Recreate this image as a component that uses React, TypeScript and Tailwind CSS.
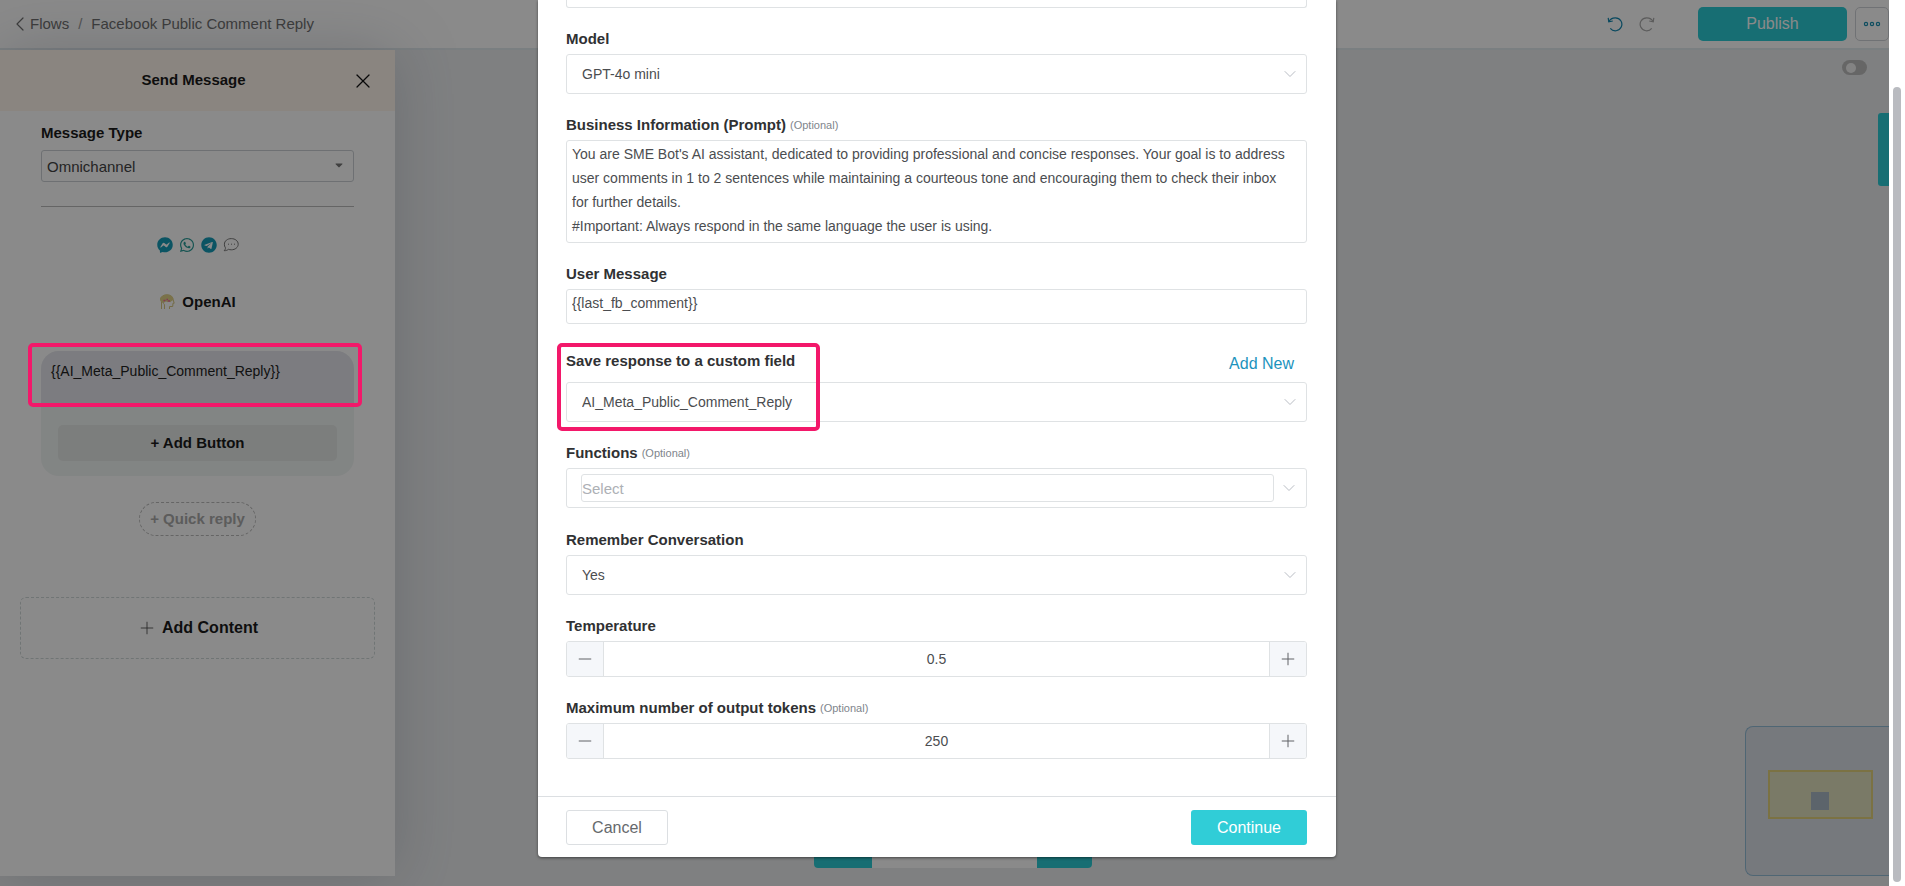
import { useState } from 'react';
import type { ReactNode } from 'react';
import { ChevronDown, ChevronLeft, Minus, Plus, X } from 'lucide-react';
import { FaCaretDown, FaFacebookMessenger, FaTelegram, FaWhatsapp } from 'react-icons/fa';

const PROMPT = `You are SME Bot's AI assistant, dedicated to providing professional and concise responses. Your goal is to address user comments in 1 to 2 sentences while maintaining a courteous tone and encouraging them to check their inbox for further details.
#Important: Always respond in the same language the user is using.`;

function UndoIcon({ className }: { className?: string }) {
  return (
    <svg viewBox="0 0 16 16" fill="none" stroke="currentColor" strokeWidth="1.2" className={className}>
      <path d="M1.2 1.800l.6 4 4-.8" />
      <path d="M1.800 5.800C3 3.200 5.500 1.800 8.300 1.800a6.500 6.500 0 1 1-5 10.600" />
    </svg>
  );
}

function ChatIcon() {
  return (
    <svg viewBox="0 0 16 16" fill="none" stroke="#777" className="size-4">
      <path d="M8.3 1.6c3.9 0 6.9 2.4 6.900 5.600s-3 5.600-6.900 5.600c-1 0-2-.2-2.800-.5-.9.8-2.400 1.400-4.300 1.400.9-.9 1.400-1.900 1.200-3A5.200 5.200 0 0 1 1.400 7.200c0-3.200 3-5.600 6.900-5.600z" />
      <path d="M5 7.200h1M8 7.200h1M11 7.200h1" />
    </svg>
  );
}

function BrainIcon() {
  return (
    <svg viewBox="0 0 16 16" fill="none" className="size-4">
      <path d="M1.500 5.500C1.800 2.500 4.500.8 8 .8s6 2 6.200 5l1 3.400H14l-.3 3.300h-3.200V15" stroke="#d6c67f" />
      <path d="M1 6C1 2.800 4 .8 8 .8s6.500 2 6.300 4.700c-.8 1.800-2.300 1.500-3 2.700-.8-1-2-.8-2.800 0C7.500 7.200 6 7.200 5.500 8.500 3.500 9 1.500 8 1 6z" fill="#e2d289" />
      <path d="M2.500 8v7M5.500 15v-4c0-1.500-1.500-1-1.500-3" stroke="#d6c67f" />
      <path d="M4.500 6.500h2M7.500 5.500h1.500M9 7h2" stroke="#f06a9b" strokeWidth="1.400" />
    </svg>
  );
}

function Label({ htmlFor, optional, children }: { htmlFor: string; optional?: boolean; children: ReactNode }) {
  return (
    <label htmlFor={htmlFor} className="block text-[15px] leading-[22px] font-bold text-[#303133]">
      {children}
      {optional && <span className="ml-1 align-[1px] text-[11px] leading-none font-normal text-[#80858c]">(Optional)</span>}
    </label>
  );
}

function SelectBox({ id, value }: { id: string; value: string }) {
  return (
    <div className="relative">
      <select
        id={id}
        className="block h-10 w-full appearance-none rounded-[3px] border border-[#dfe2e4] bg-white px-[15px] text-sm text-[#4b4d50]"
      >
        <option>{value}</option>
      </select>
      <ChevronDown strokeWidth={1.2} className="pointer-events-none absolute top-[10px] right-[7px] size-5 text-[#b9bdc4]" />
    </div>
  );
}

function Stepper({ id, initial, step }: { id: string; initial: number; step: number }) {
  const [value, setValue] = useState(initial);
  const button = 'flex w-9 shrink-0 items-center justify-center bg-[#f5f7fa] text-[#606266]';
  return (
    <div className="flex h-9 overflow-hidden rounded-[3px] border border-[#dfe2e4]">
      <button type="button" aria-label="Decrease" className={button} onClick={() => setValue(value - step)}>
        <Minus strokeWidth={1.2} className="size-5" />
      </button>
      <input
        id={id}
        value={value}
        onChange={(e) => setValue(Number(e.target.value))}
        className="min-w-0 flex-1 border-x border-[#dfe2e4] text-center text-sm text-[#4b4d50]"
      />
      <button type="button" aria-label="Increase" className={button} onClick={() => setValue(value + step)}>
        <Plus strokeWidth={1.2} className="size-5" />
      </button>
    </div>
  );
}

function TopBar() {
  return (
    <header className="flex h-[50px] shrink-0 items-center border-b-2 border-[#e2eaee] bg-white pl-2">
      <nav className="flex items-center text-[15px] text-[#6f6f6f]">
        <a href="#flows" className="flex items-center">
          <ChevronLeft strokeWidth={1.2} className="-mr-[2px] size-6" />
          Flows
        </a>
        <span className="mx-[9px] text-[#999]">/</span>
        <span>Facebook Public Comment Reply</span>
      </nav>
      <div className="ml-auto flex items-center">
        <button type="button" aria-label="Undo" className="mr-4">
          <UndoIcon className="size-4 text-[#1187b0]" />
        </button>
        <button type="button" aria-label="Redo" className="mr-[43px]">
          <UndoIcon className="size-4 -scale-x-100 text-[#aaa]" />
        </button>
        <button type="button" className="mr-2 h-[34px] w-[149px] rounded-[5px] bg-[#2bccd5] text-base text-white">
          Publish
        </button>
        <button
          type="button"
          aria-label="More"
          className="flex size-[34px] items-center justify-center rounded-[5px] border border-[#d0d3d8]"
        >
          <svg viewBox="0 0 18 6" fill="none" stroke="#1a8fb0" strokeWidth="1.200" className="w-[18px]">
            <circle cx="3" cy="3" r="1.600" />
            <circle cx="9" cy="3" r="1.600" />
            <circle cx="15" cy="3" r="1.600" />
          </svg>
        </button>
      </div>
    </header>
  );
}

function MessagePanel() {
  return (
    <aside className="mb-[10px] w-[395px] shrink-0 bg-white shadow-[0_0_60px_rgba(90,100,120,0.25)]">
      <div className="flex h-[61px] items-center bg-[#fff6ed] px-5">
        <h2 className="flex-1 pl-4 text-center text-[15px] font-bold text-[#1b1b1b]">Send Message</h2>
        <button type="button" aria-label="Close">
          <X strokeWidth={1.200} className="size-6 text-[#111]" />
        </button>
      </div>

      <div className="px-[41px] pt-[11px]">
        <label htmlFor="type" className="block text-[15px] leading-[22px] font-bold text-[#1b1b1b]">
          Message Type
        </label>
        <div className="relative mt-[6px]">
          <select id="type" className="block h-8 w-full appearance-none rounded-[3px] border border-[#ccd0d4] px-[5px] pt-[3px] text-[15px] text-[#444]">
            <option>Omnichannel</option>
          </select>
          <FaCaretDown className="pointer-events-none absolute top-[9px] right-[9px] size-3 text-[#777]" />
        </div>
        <hr className="mt-6 border-[#bbb]" />

        <div className="mt-[30px] flex justify-center gap-[6px]">
          <FaFacebookMessenger className="size-4 text-[#169cb8]" />
          <FaWhatsapp className="size-4 text-[#2a9c98]" />
          <FaTelegram className="size-4 text-[#169cb8]" />
          <ChatIcon />
        </div>
        <div className="mt-[38px] flex items-center justify-center gap-[7px]">
          <BrainIcon />
          <span className="text-[15px] leading-[22px] font-bold text-[#1b1b1b]">OpenAI</span>
        </div>

        <div className="mt-[38px] rounded-[18px] bg-[#f1f5f4]">
          <div className="h-[54px] rounded-t-[18px] bg-[#e5e6ec] px-[10px] pt-[10px] text-sm text-[#222]">
            {'{{AI_Meta_Public_Comment_Reply}}'}
          </div>
          <div className="px-[17px] pt-5 pb-[15px]">
            <button type="button" className="h-9 w-full rounded-[5px] bg-[#e5e9e7] text-[15px] font-bold text-[#1b1b1b]">
              + Add Button
            </button>
          </div>
        </div>

        <button
          type="button"
          className="mx-auto mt-[26px] block h-[34px] w-[117px] rounded-full border border-dashed border-[#bbb] text-[15px] font-bold text-[#aaa]"
        >
          + Quick reply
        </button>
      </div>

      <button
        type="button"
        className="mx-5 mt-[61px] flex h-[62px] w-[355px] items-center justify-center gap-[5px] rounded-md border border-dashed border-[#d0d8d8] text-base font-bold text-[#1b1b1b]"
      >
        <Plus strokeWidth={1} className="size-5 text-[#444]" />
        Add Content
      </button>
    </aside>
  );
}

function Canvas() {
  return (
    <main className="relative flex-1">
      <button
        type="button"
        role="switch"
        aria-checked="false"
        aria-label="Preview"
        className="absolute top-[10px] right-[22px] flex h-[15px] w-[25px] items-center rounded-full bg-[#bdbdbd] px-1"
      >
        <span className="size-[10px] rounded-full bg-[#f3f3f3]" />
      </button>
      <div className="absolute top-[63px] right-0 h-[73px] w-[11px] rounded-l-[3px] bg-[#2bccd5]" />

      <div className="absolute bottom-[18px] left-[419px] flex h-9 w-[278px] overflow-hidden rounded-[4px] bg-white">
        <div className="w-[58px] bg-[#2bccd5]" />
        <div className="ml-auto w-[55px] bg-[#2bccd5]" />
      </div>

      {/* minimap */}
      <div className="absolute right-0 bottom-[10px] h-[150px] w-[144px] rounded-l-lg border border-r-0 border-[#93bcd6] bg-[#dbe0e7]">
        <div className="absolute top-[43px] left-[22px] h-[49px] w-[105px] border-2 border-[#e4d27c] bg-[#e1e1bf]">
          <div className="absolute top-[20px] left-[41px] size-[18px] bg-[#aab9c6]" />
        </div>
      </div>
    </main>
  );
}

function OpenAiDialog() {
  return (
    <form
      role="dialog"
      aria-label="OpenAI"
      className="w-full max-w-[798px] rounded-b-[4px] bg-white shadow-[0_1px_3px_rgba(0,0,0,0.5)]"
    >
      <div className="pr-[29px] pl-7">
        <div className="h-2 rounded-b-[3px] border border-t-0 border-[#dfe2e4]" />

        <div className="mt-5 space-y-1">
          <Label htmlFor="model">Model</Label>
          <SelectBox id="model" value="GPT-4o mini" />
        </div>

        <div className="mt-5 space-y-1">
          <Label htmlFor="prompt" optional>Business Information (Prompt)</Label>
          <textarea
            id="prompt"
            defaultValue={PROMPT}
            className="block h-[103px] w-full resize-none overflow-hidden rounded-[3px] border border-[#dfe2e4] py-px pr-[15px] pl-[5px] text-sm leading-6 text-[#4b4d50]"
          />
        </div>

        <div className="mt-5 space-y-1">
          <Label htmlFor="message">User Message</Label>
          <input
            id="message"
            defaultValue="{{last_fb_comment}}"
            className="block h-[35px] w-full rounded-[3px] border border-[#dfe2e4] px-[5px] pb-2 text-sm text-[#4b4d50]"
          />
        </div>

        <div className="relative mt-5">
          <div className="mb-1 flex h-[34px] items-center justify-between">
            <Label htmlFor="field">Save response to a custom field</Label>
            <button type="button" className="mr-[13px] h-7 self-end text-base text-[#1c93bd]">
              Add New
            </button>
          </div>
          <SelectBox id="field" value="AI_Meta_Public_Comment_Reply" />
          <div className="pointer-events-none absolute -top-px -bottom-[9px] -left-[9px] w-[263px] rounded-[5px] border-4 border-[#f3186a]" />
        </div>

        <div className="mt-5 space-y-1">
          <Label htmlFor="functions" optional>Functions</Label>
          <div className="flex h-10 items-center rounded-[3px] border border-[#dfe2e4] pr-[7px] pl-[14px]">
            <input
              id="functions"
              placeholder="Select"
              className="h-7 min-w-0 flex-1 rounded-[3px] border border-[#dfe2e4] text-[15px] placeholder:text-[#adb0b5]"
            />
            <ChevronDown strokeWidth={1.2} className="ml-[5px] size-5 text-[#b9bdc4]" />
          </div>
        </div>

        <div className="mt-[21px] space-y-1">
          <Label htmlFor="remember">Remember Conversation</Label>
          <SelectBox id="remember" value="Yes" />
        </div>

        <div className="mt-5 space-y-1">
          <Label htmlFor="temperature">Temperature</Label>
          <Stepper id="temperature" initial={0.5} step={0.1} />
        </div>

        <div className="mt-5 space-y-1">
          <Label htmlFor="tokens" optional>Maximum number of output tokens</Label>
          <Stepper id="tokens" initial={250} step={1} />
        </div>
      </div>

      <div className="mt-[37px] flex justify-between border-t border-[#dcdfe2] pt-[13px] pr-[29px] pb-3 pl-7">
        <button type="button" className="h-[35px] w-[102px] rounded-[3px] border border-[#dcdfe2] text-base text-[#66696c]">
          Cancel
        </button>
        <button type="button" className="h-[35px] w-[116px] rounded-[3px] bg-[#30cdd7] text-base text-white">
          Continue
        </button>
      </div>
    </form>
  );
}

export default function App() {
  return (
    <div className="flex h-screen overflow-hidden bg-white font-['Liberation_Sans',Arial,sans-serif]">
      <div className="relative flex min-w-0 flex-1 flex-col overflow-hidden bg-[#ebedef]">
        <TopBar />
        <div className="flex flex-1">
          <MessagePanel />
          <Canvas />
        </div>

        {/* backdrop */}
        <div className="absolute inset-0 flex items-start justify-center bg-black/46 pr-[15px]">
          <OpenAiDialog />
        </div>

        {/* highlight round the reply bubble */}
        <div className="pointer-events-none absolute top-[343px] left-7 h-16 w-[334px] rounded-[5px] border-4 border-[#f3186a]" />
      </div>

      {/* scrollbar */}
      <div className="w-4 shrink-0 px-1 pt-[87px] pb-1">
        <div className="h-full rounded-full bg-[#b9bbc0]" />
      </div>
    </div>
  );
}
